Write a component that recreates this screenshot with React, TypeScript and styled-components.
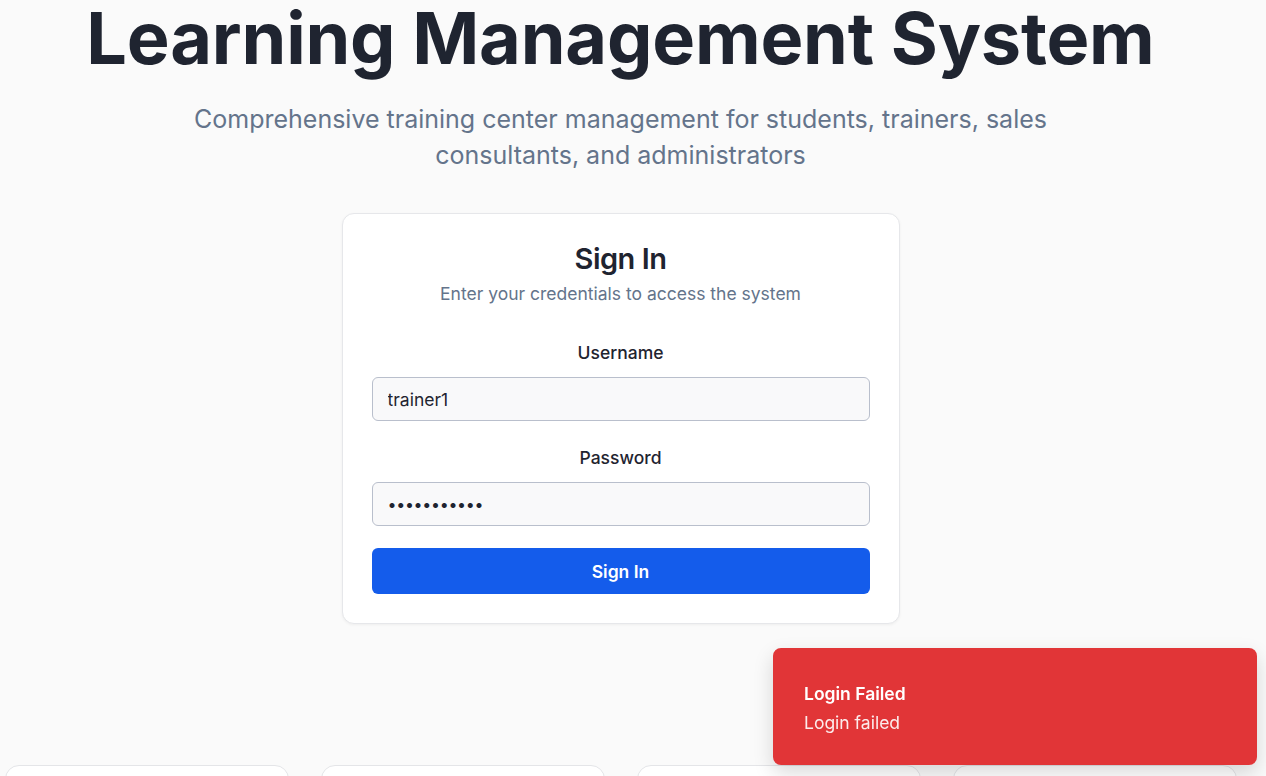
import React from "react";
import styled, { createGlobalStyle } from "styled-components";

const GlobalStyle = createGlobalStyle`
  html, body {
    margin: 0;
    padding: 0;
    overflow: hidden;
    background: #fafafa;
  }
  body {
    font-family: Inter, "Noto Sans", "Liberation Sans", sans-serif;
    color: #1f2430;
  }
  * { box-sizing: border-box; }
`;

const Page = styled.div`
  min-height: 100vh;
  padding: 0 25px 0 0;
  background: #fafafa;
`;

const Container = styled.main`
  display: flex;
  flex-direction: column;
  align-items: center;
`;

const Hero = styled.header`
  display: flex;
  flex-direction: column;
  align-items: center;
  text-align: center;
`;

const Title = styled.h1`
  margin: 2px 0 0;
  font-size: 72px;
  line-height: 72px;
  font-weight: 700;
  letter-spacing: -0.2px;
  color: #1f2430;
  white-space: nowrap;
`;

const Subtitle = styled.p`
  margin: 27px 0 0;
  max-width: 900px;
  font-size: 25px;
  line-height: 36px;
  font-weight: 400;
  color: #64748b;
`;

const Card = styled.section`
  margin-top: 40px;
  width: 558px;
  background: #ffffff;
  border: 1px solid #e6e7ea;
  border-radius: 12px;
  box-shadow: 0 1px 3px rgba(0, 0, 0, 0.05);
  padding: 27px 29px 29px;
  display: flex;
  flex-direction: column;
`;

const CardHead = styled.div`
  display: flex;
  flex-direction: column;
  align-items: center;
  gap: 5px;
  margin-bottom: 37px;
`;

const CardTitle = styled.h2`
  margin: 0;
  font-size: 29px;
  line-height: 36px;
  font-weight: 600;
  letter-spacing: -0.5px;
  color: #1f2430;
`;

const CardSub = styled.p`
  margin: 0;
  font-size: 17.5px;
  line-height: 24px;
  color: #64748b;
`;

const Field = styled.div`
  display: flex;
  flex-direction: column;
  gap: 14px;
  margin-bottom: 27px;
`;

const Label = styled.label`
  text-align: center;
  font-size: 17.5px;
  line-height: 20px;
  font-weight: 500;
  color: #1f2430;
`;

const Input = styled.input<{ $secret?: boolean }>`
  height: 44px;
  width: 100%;
  border: 1px solid #b9bfcc;
  border-radius: 6px;
  background: #f9f9fa;
  padding: 0 15px;
  font-family: Inter, "Noto Sans", sans-serif;
  font-size: ${(p) => (p.$secret ? "16px" : "17.5px")};
  letter-spacing: ${(p) => (p.$secret ? "-0.3px" : "0")};
  color: #1f2430;
  outline: none;
`;

const Button = styled.button`
  margin-top: -5px;
  height: 46px;
  width: 100%;
  border: none;
  border-radius: 6px;
  background: #145ceb;
  color: #ffffff;
  font-family: Inter, "Noto Sans", sans-serif;
  font-size: 17.5px;
  font-weight: 600;
  cursor: pointer;
`;

const FeatureGrid = styled.div`
  margin-top: 141px;
  width: 100%;
  padding: 0 4px 0 5px;
  display: grid;
  grid-template-columns: repeat(4, 1fr);
  gap: 32px;
`;

const FeatureCard = styled.div`
  height: 160px;
  background: #ffffff;
  border: 1px solid #e4e5e8;
  border-radius: 14px;
`;

const Toast = styled.div`
  position: fixed;
  right: 9px;
  bottom: 11px;
  width: 484px;
  height: 117px;
  background: #e13537;
  border-radius: 8px;
  box-shadow: 0 8px 20px rgba(0, 0, 0, 0.15);
  padding: 4px 31px 0;
  display: flex;
  flex-direction: column;
  justify-content: center;
  gap: 5px;
  color: #ffffff;
`;

const ToastTitle = styled.div`
  font-size: 17.5px;
  line-height: 24px;
  font-weight: 600;
`;

const ToastText = styled.div`
  font-size: 17.5px;
  line-height: 24px;
  opacity: 0.9;
`;

export default function App() {
  return (
    <>
      <GlobalStyle />
      <Page>
        <Container>
          <Hero>
            <Title>Learning Management System</Title>
            <Subtitle>
              Comprehensive training center management for students, trainers, sales consultants, and administrators
            </Subtitle>
          </Hero>
          <Card>
            <CardHead>
              <CardTitle>Sign In</CardTitle>
              <CardSub>Enter your credentials to access the system</CardSub>
            </CardHead>
            <Field>
              <Label htmlFor="username">Username</Label>
              <Input id="username" defaultValue="trainer1" />
            </Field>
            <Field>
              <Label htmlFor="password">Password</Label>
              <Input id="password" type="password" $secret defaultValue="password123" />
            </Field>
            <Button type="button">Sign In</Button>
          </Card>
          <FeatureGrid>
            <FeatureCard />
            <FeatureCard />
            <FeatureCard />
            <FeatureCard />
          </FeatureGrid>
        </Container>
        <Toast>
          <ToastTitle>Login Failed</ToastTitle>
          <ToastText>Login failed</ToastText>
        </Toast>
      </Page>
    </>
  );
}
